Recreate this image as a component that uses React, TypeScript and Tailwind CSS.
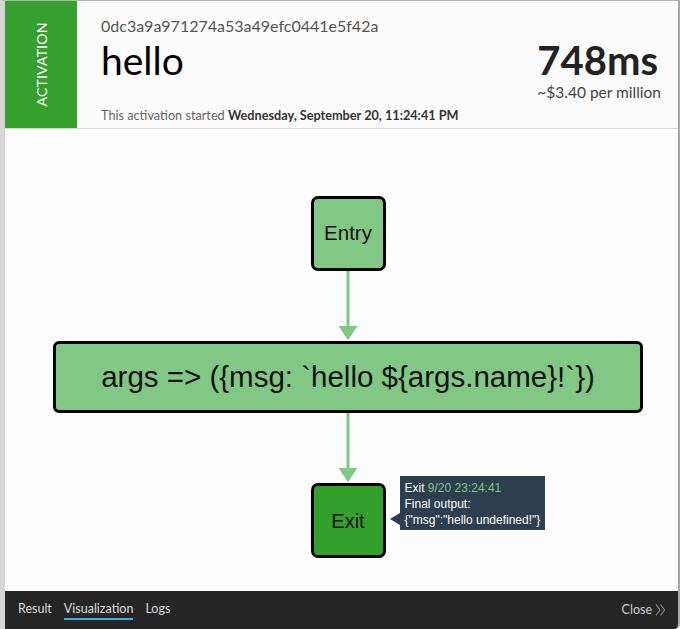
import React from "react";

const lato = { fontFamily: "Lato, 'Open Sans', sans-serif" };
const arial = { fontFamily: "'Liberation Sans', Arial, sans-serif" };

function Arrow() {
  return (
    <svg width="20" height="70" viewBox="0 0 20 70" className="block">
      <line x1="10" y1="0" x2="10" y2="57" stroke="#80c883" strokeWidth="3" />
      <polygon points="0.5,55 19.5,55 10,69" fill="#80c883" />
    </svg>
  );
}

export default function App() {
  return (
    <div
      className="w-[680px] h-[629px] flex flex-col bg-[#fcfcfc] border-t border-t-[#b5b5b5] border-l-[5px] border-l-[#d6d6d6] border-r-2 border-r-[#a8a8a8] overflow-hidden rounded-br-[5px]"
      style={lato}
    >
      {/* Header */}
      <div className="h-[128px] shrink-0 flex border-b border-[#d9d9d9] bg-[#fbfbfb]">
        <div className="w-[72px] bg-[#35a02e] flex items-center justify-center">
          <span className="-rotate-90 whitespace-nowrap text-white text-[14px] tracking-[0.2px]">
            ACTIVATION
          </span>
        </div>
        <div className="flex-1 flex justify-between pl-6 pr-[17px]">
          <div className="flex flex-col">
            <div className="text-[16px] text-[#555] mt-[15px] leading-5">
              0dc3a9a971274a53a49efc0441e5f42a
            </div>
            <div className="text-[39px] text-black leading-[44px] mt-[2px]">hello</div>
            <div className="mt-auto mb-[5px] text-[12.7px] text-[#666] leading-4">
              This activation started{" "}
              <span className="font-bold text-[#333]">
                Wednesday, September 20, 11:24:41 PM
              </span>
            </div>
          </div>
          <div className="flex flex-col items-end pt-[37px]">
            <div className="text-[40px] font-bold text-[#222] leading-[44px] mr-[3px]">748ms</div>
            <div className="text-[15.5px] text-[#444] leading-[18px] mt-[1px]">
              ~$3.40 per million
            </div>
          </div>
        </div>
      </div>

      {/* Visualization canvas */}
      <div className="flex-1 bg-[#fdfdfd] flex flex-col items-center pt-[67px] pl-[13px]" style={arial}>
        <div className="w-[75px] h-[75px] rounded-[7px] border-[3px] border-black bg-[#80c883] flex items-center justify-center text-[20.5px] text-[#111]">
          Entry
        </div>
        <Arrow />
        <div className="w-[590px] h-[72px] rounded-[6px] border-[3px] border-black bg-[#80c883] flex items-center justify-center text-[29.5px] text-[#111]">
          args =&gt; ({"{"}msg: `hello ${"{"}args.name{"}"}!`{"}"})
        </div>
        <Arrow />
        <div className="relative">
          <div className="w-[75px] h-[75px] rounded-[7px] border-[3px] border-black bg-[#33a02c] flex items-center justify-center text-[20px] text-[#111]">
            Exit
          </div>
          <div className="absolute left-[89px] -top-[7px] w-[145px] h-[54px] bg-[#2c3e50] text-white text-[12px] leading-[16px] pl-[5px] pt-[4px] whitespace-nowrap">
            <div>
              Exit <span className="text-[#80c883]">9/20 23:24:41</span>
            </div>
            <div>Final output:</div>
            <div>{'{"msg":"hello undefined!"}'}</div>
            <div className="absolute -left-[10px] top-[37px] w-0 h-0 border-y-[6px] border-y-transparent border-r-[10px] border-r-[#2c3e50]" />
          </div>
        </div>
      </div>

      {/* Footer tabs */}
      <div className="h-[38px] shrink-0 bg-[#252525] flex items-center justify-between pl-[13px] pr-[12px] text-[12.5px]">
        <div className="flex items-start gap-[12px] text-[#dcdcdc] leading-[18px]">
          <span>Result</span>
          <span className="border-b-2 border-[#3bb0d9]">Visualization</span>
          <span>Logs</span>
        </div>
        <div className="flex items-center gap-[3px] text-[#cfcfcf]">
          <span>Close</span>
          <svg width="11" height="12" viewBox="0 0 11 12" fill="none" stroke="#8a8a8a" strokeWidth="1.2">
            <polyline points="1,0.5 5,6 1,11.5" />
            <polyline points="5.5,0.5 9.5,6 5.5,11.5" />
          </svg>
        </div>
      </div>
    </div>
  );
}
